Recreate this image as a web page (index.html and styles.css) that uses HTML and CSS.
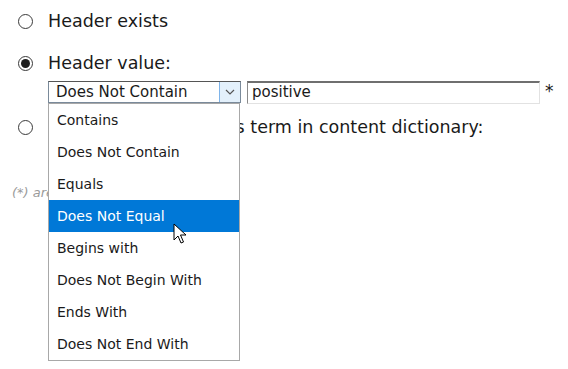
FILE: index.html
```html
<!DOCTYPE html>
<html>
<head>
<meta charset="utf-8">
<link rel="stylesheet" href="styles.css">
</head>
<body>
<div class="form">
  <div class="radio-row r1"><span class="radio"></span><span class="label">Header exists</span></div>
  <div class="radio-row r2"><span class="radio checked"></span><span class="label">Header value:</span></div>
  <div class="controls">
    <div class="select">
      <span class="select-text">Does Not Contain</span>
      <span class="select-btn"><svg width="10" height="6" viewBox="0 0 10 6"><path d="M1 1 L5 5 L9 1" fill="none" stroke="#555" stroke-width="1.2"/></svg></span>
    </div>
    <div class="text-input">positive</div>
    <span class="req">*</span>
  </div>
  <div class="radio-row r3"><span class="radio"></span><span class="label">Header value contains term in content dictionary:</span></div>
  <div class="note">(*) are required fields</div>

  <ul class="dropdown">
    <li>Contains</li>
    <li>Does Not Contain</li>
    <li>Equals</li>
    <li class="active">Does Not Equal</li>
    <li>Begins with</li>
    <li>Does Not Begin With</li>
    <li>Ends With</li>
    <li>Does Not End With</li>
  </ul>
  <svg class="cursor" width="14" height="22" viewBox="0 0 14 22"><path d="M1 1 L1 17 L5 13 L8 20 L10.5 19 L7.5 12 L13 12 Z" fill="#fff" stroke="#000" stroke-width="1" stroke-linejoin="round"/></svg>
</div>
</body>
</html>
```
FILE: styles.css
```css
html, body {
  margin: 0;
  padding: 0;
  background: #fff;
}
body {
  font-family: "DejaVu Sans", Verdana, sans-serif;
  color: #1a1a1a;
}
.form {
  position: relative;
  width: 568px;
  height: 369px;
  overflow: hidden;
  padding-top: 7px;
  box-sizing: border-box;
}
.radio-row {
  display: flex;
  align-items: center;
  height: 28px;
  padding-left: 18px;
}
.r2 { margin-top: 14px; }
.r3 { margin-top: 9px; }
.radio {
  width: 13px;
  height: 13px;
  border: 1px solid #3a3a3a;
  border-radius: 50%;
  box-sizing: content-box;
  display: flex;
  align-items: center;
  justify-content: center;
  flex: none;
}
.radio.checked::after {
  content: "";
  width: 9px;
  height: 9px;
  border-radius: 50%;
  background: #1e1e1e;
}
.label {
  margin-left: 15px;
  font-size: 17.5px;
  white-space: nowrap;
}
.controls {
  display: flex;
  align-items: flex-start;
  margin-top: 4px;
  padding-left: 48px;
  height: 23px;
}
.select {
  display: flex;
  width: 193px;
  height: 22px;
  box-sizing: border-box;
  border: 1px solid #7a8a9a;
  border-top-color: #555;
  font-size: 15px;
}
.select-text {
  flex: 1;
  padding-left: 7px;
  line-height: 20px;
  white-space: nowrap;
}
.select-btn {
  width: 20px;
  height: 20px;
  background: #e3f0fb;
  border-left: 1px solid #7eb4ea;
  display: flex;
  align-items: center;
  justify-content: center;
}
.text-input {
  margin-left: 6px;
  width: 293px;
  height: 23px;
  box-sizing: border-box;
  border: 1px solid #e2e2e2;
  border-top: 2px solid #6f6f6f;
  border-left: 1px solid #8a8a8a;
  padding-left: 4px;
  font-size: 15px;
  line-height: 19px;
}
.req {
  margin-left: 5px;
  font-size: 17px;
  line-height: 20px;
}
.note {
  margin-top: 44px;
  padding-left: 12px;
  font-size: 13px;
  font-style: italic;
  color: #9a9a9a;
}
.dropdown {
  position: absolute;
  left: 48px;
  top: 103px;
  width: 192px;
  margin: 0;
  padding: 0;
  list-style: none;
  background: #fff;
  border: 1px solid #a8a8a8;
  box-sizing: border-box;
  font-size: 14px;
}
.dropdown li {
  height: 32px;
  line-height: 32px;
  padding-left: 8px;
  color: #1a1a1a;
  white-space: nowrap;
}
.dropdown li.active {
  background: #0078d7;
  color: #fff;
}
.cursor {
  position: absolute;
  left: 173px;
  top: 223px;
}
```
